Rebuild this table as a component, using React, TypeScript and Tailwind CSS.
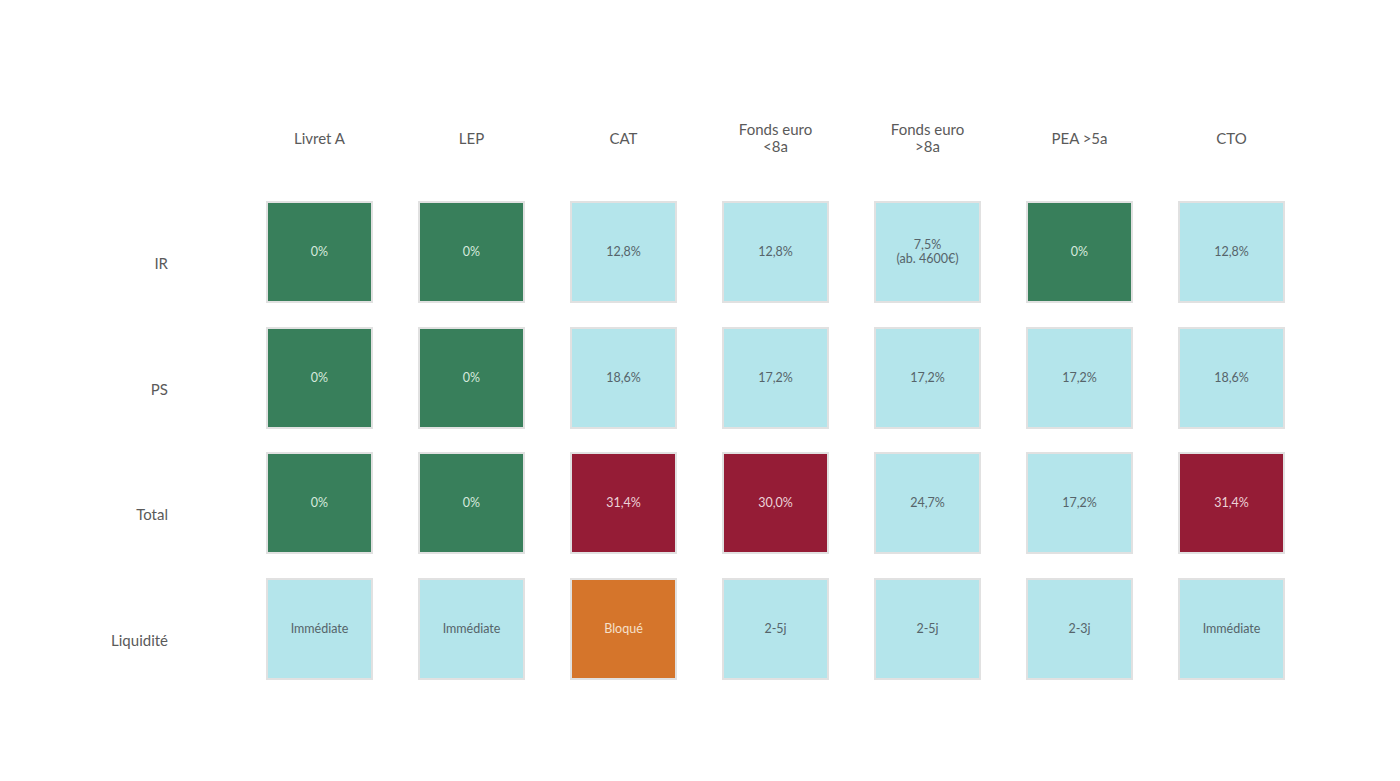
import React from "react";

type Tone = "g" | "b" | "r" | "o";

const cols = ["Livret A", "LEP", "CAT", "Fonds euro\n<8a", "Fonds euro\n>8a", "PEA >5a", "CTO"];

const rows: { label: string; mt: string; cells: [string, Tone][] }[] = [
  {
    label: "IR",
    mt: "mt-0",
    cells: [
      ["0%", "g"],
      ["0%", "g"],
      ["12,8%", "b"],
      ["12,8%", "b"],
      ["7,5%\n(ab. 4600€)", "b"],
      ["0%", "g"],
      ["12,8%", "b"],
    ],
  },
  {
    label: "PS",
    mt: "mt-[24px]",
    cells: [
      ["0%", "g"],
      ["0%", "g"],
      ["18,6%", "b"],
      ["17,2%", "b"],
      ["17,2%", "b"],
      ["17,2%", "b"],
      ["18,6%", "b"],
    ],
  },
  {
    label: "Total",
    mt: "mt-[23px]",
    cells: [
      ["0%", "g"],
      ["0%", "g"],
      ["31,4%", "r"],
      ["30,0%", "r"],
      ["24,7%", "b"],
      ["17,2%", "b"],
      ["31,4%", "r"],
    ],
  },
  {
    label: "Liquidité",
    mt: "mt-[24px]",
    cells: [
      ["Immédiate", "b"],
      ["Immédiate", "b"],
      ["Bloqué", "o"],
      ["2-5j", "b"],
      ["2-5j", "b"],
      ["2-3j", "b"],
      ["Immédiate", "b"],
    ],
  },
];

const toneCls: Record<Tone, string> = {
  g: "bg-[#387f5b] text-[#d6e9dd]",
  b: "bg-[#b4e5eb] text-[#56646a]",
  r: "bg-[#951c36] text-[#ecd3d8]",
  o: "bg-[#d5752b] text-[#f6e0cc]",
};

export default function App() {
  return (
    <div
      className="w-[1400px] h-[781px] bg-white pt-[118px]"
      style={{ fontFamily: "Lato, 'Noto Sans', sans-serif" }}
    >
      <div className="flex h-[40px] items-center">
        <div className="w-[168px] shrink-0" />
        <div className="ml-[98px] flex gap-[45px] h-[40px]">
          {cols.map((c) => (
            <div
              key={c}
              className="w-[107px] h-[40px] flex items-center justify-center text-center text-[15px] leading-[17px] text-[#5a5a5a] whitespace-pre-line"
            >
              {c}
            </div>
          ))}
        </div>
      </div>
      <div className="mt-[43px]">
        {rows.map((r) => (
          <div key={r.label} className={`flex ${r.mt}`}>
            <div className="w-[168px] shrink-0 h-[102px] flex items-center justify-end pt-[22px] text-[15px] text-[#5a5a5a]">
              {r.label}
            </div>
            <div className="ml-[98px] flex gap-[45px]">
              {r.cells.map(([t, tone], i) => (
                <div
                  key={i}
                  className={`w-[107px] h-[102px] border-2 border-[#e1e1e1] flex items-center justify-center text-center text-[12.5px] leading-[14px] whitespace-pre-line ${toneCls[tone]}`}
                >
                  {t}
                </div>
              ))}
            </div>
          </div>
        ))}
      </div>
    </div>
  );
}
